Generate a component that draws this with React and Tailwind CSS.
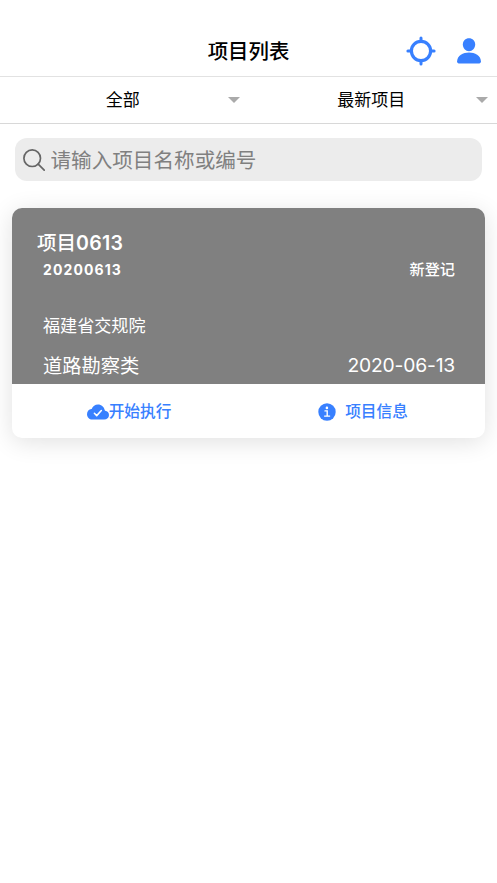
import React, { useState } from "react";

const projects = [
    {
        id: 1,
        name: "项目",
        number: "0613",
        code: "20200613",
        status: "新登记",
        company: "福建省交规院",
        category: "道路勘察类",
        date: "2020-06-13",
    },
];

const LocateIcon = () => (
    <svg viewBox="0 0 30 30" className="w-[30px] h-[30px]" fill="none" stroke="#3880ff">
        <circle cx="15" cy="15" r="9.6" strokeWidth="3.2" />
        <path d="M15 1.900v3.500M15 24.600v3.500M1.900 15h3.500M24.600 15h3.500" strokeWidth="3" strokeLinecap="round" />
    </svg>
);

const PersonIcon = () => (
    <svg viewBox="0 0 24 26" className="w-6 h-[26px]" fill="#3880ff">
        <path d="M12 0.300c3.500 0 6.200 2.700 6.200 6.200S15.400 13.200 12 13.200 5.800 10 5.800 6.500 8.500.3 12 .3z" />
        <path d="M12 14.400c-5.800 0-11.900 3.200-11.900 8.900 0 1.400.6 2.100 1.700 2.100h20.400c1.100 0 1.700-.7 1.700-2.100 0-5.700-6.100-8.900-11.900-8.900z" />
    </svg>
);

const SearchIcon = () => (
    <svg viewBox="0 0 22 22" className="w-[22px] h-[22px] shrink-0" fill="none" stroke="#666" strokeWidth="1.7" strokeLinecap="round">
        <circle cx="9.2" cy="9.2" r="8.3" />
        <path d="M15.200 15.200l6 6" />
    </svg>
);

const CloudDoneIcon = () => (
    <svg viewBox="0 0 512 512" className="w-[22px] h-[22px] shrink-0">
        <path
            fill="#3880ff"
            d="M424 226c-5 0-9-4-10-9C400 138 336 80 256 80c-69 0-122 40-144 102-1 4-5 7-9 7C45 197 0 242 0 307c0 68 55 125 124 125h276c62 0 112-39 112-104 0-61-39-98-88-102z"
        />
        <path d="M172 286l54 54 108-118" fill="none" stroke="#fff" strokeWidth="36" strokeLinecap="round" strokeLinejoin="round" />
    </svg>
);

const InfoIcon = () => (
    <svg viewBox="0 0 18 18" className="w-[18px] h-[18px] shrink-0">
        <circle cx="9" cy="9" r="8.700" fill="#3880ff" />
        <circle cx="8.900" cy="4.900" r="1.300" fill="#fff" />
        <path d="M7 7.900h2.200v5M6.600 13.100h5" fill="none" stroke="#fff" strokeWidth="1.400" strokeLinecap="round" />
    </svg>
);

const Caret = () => <span className="w-0 h-0 border-x-[6px] border-x-transparent border-t-[6px] border-t-[#aaaaaa]"></span>;

const FilterButton = ({ label }) => (
    <button className="flex-1 flex items-center pr-[9px] text-[17px] text-black">
        <span className="flex-1 pl-[18px] pt-[2px] text-center">{label}</span>
        <Caret />
    </button>
);

const ProjectCard = ({ item }) => (
    <div className="mx-3 mt-[27px] rounded-[10px] overflow-hidden bg-white shadow-[0_4px_24px_rgba(0,0,0,0.12)]">
        {/* Project details */}
        <div className="h-44 bg-[#808080] text-white pl-[25px] pr-[30px] pt-[21px]">
            <h2 className="text-[19.5px] leading-7 font-medium">
                {item.name}
                <span className="font-semibold tracking-[0.3px]">{item.number}</span>
            </h2>
            <div className="flex justify-between pl-[6px] h-[26px] items-center text-[15.2px] font-medium">
                <span className="pb-[2px] text-[14px] font-bold tracking-[1.1px]">{item.code}</span>
                <span>{item.status}</span>
            </div>
            <p className="pl-[6px] mt-[30px] text-[17.1px] leading-[26px]">{item.company}</p>
            <div className="flex justify-between pl-[6px] mt-[13px] text-[19.3px] leading-7">
                <span>{item.category}</span>
                <span className="-mt-px tracking-[-0.2px]">{item.date}</span>
            </div>
        </div>

        {/* Actions */}
        <div className="flex h-[54px] text-[#3880ff] text-[15.7px] font-medium">
            <button className="flex-1 flex items-center justify-center pt-[2px]">
                <CloudDoneIcon />
                <span className="pb-px">开始执行</span>
            </button>
            <button className="flex-1 flex items-center justify-center gap-[9px] pr-[5px] pt-[2px]">
                <InfoIcon />
                <span className="pb-px">项目信息</span>
            </button>
        </div>
    </div>
);

const App = () => {
    const [keyword, setKeyword] = useState("");
    const filtered = projects.filter((p) => (p.name + p.number).includes(keyword) || p.code.includes(keyword));

    return (
        <div className="w-full min-h-screen bg-white font-['Inter','Noto_Sans_CJK_SC',sans-serif]">
            {/* Header */}
            <header className="grid grid-cols-[1fr_auto_1fr] items-center h-[77px] pt-[25px] border-b border-[#e2e2e2]">
                <span></span>
                <h1 className="pt-[3px] text-[20.4px] font-medium text-black">项目列表</h1>
                <div className="flex items-center justify-end gap-[21px] pr-4">
                    <LocateIcon />
                    <PersonIcon />
                </div>
            </header>

            {/* Filters */}
            <div className="flex h-[47px] border-b border-[#d8d8d8]">
                <FilterButton label="全部" />
                <FilterButton label="最新项目" />
            </div>

            {/* Search */}
            <label className="mx-[15px] mt-[14px] h-[43px] flex items-center gap-[5.5px] pl-2 rounded-xl bg-[#ececec]">
                <SearchIcon />
                <input
                    value={keyword}
                    onChange={(e) => setKeyword(e.target.value)}
                    placeholder="请输入项目名称或编号"
                    className="flex-1 pt-1 bg-transparent outline-none text-[20.6px] placeholder:text-[#808080]"
                />
            </label>

            {filtered.map((item) => (
                <ProjectCard key={item.id} item={item} />
            ))}
        </div>
    );
};

export default App;
